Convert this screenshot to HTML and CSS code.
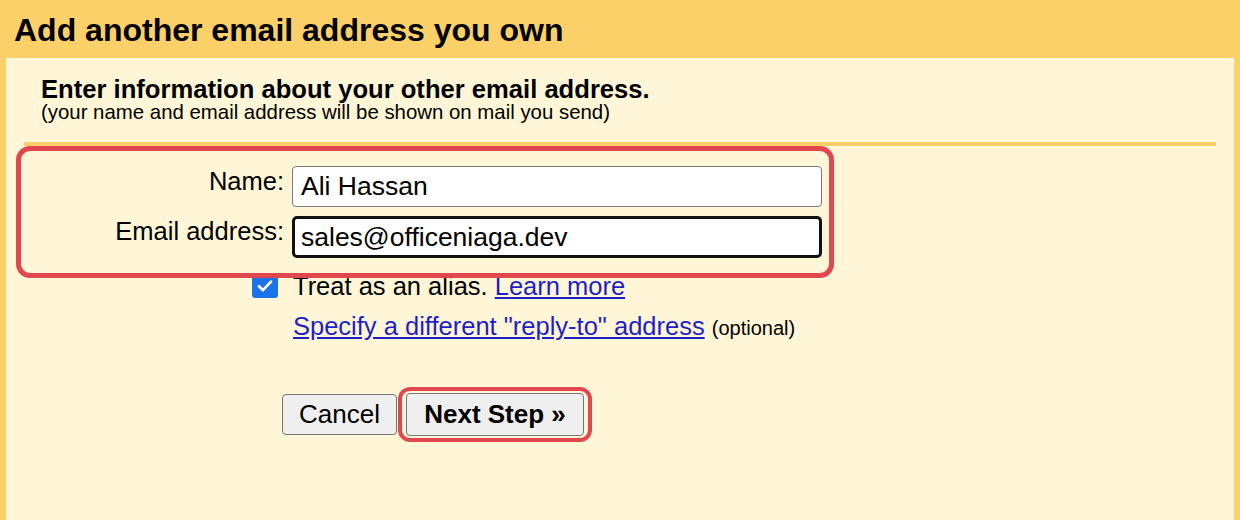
FILE: index.html
```html
<!DOCTYPE html>
<html lang="en">
<head>
<meta charset="utf-8">
<title>Add another email address you own</title>
<link rel="stylesheet" href="styles.css">
</head>
<body>
<div class="header">Add another email address you own</div>
<div class="panel">
  <div class="intro">
    <h2 class="intro-title">Enter information about your other email address.</h2>
    <p class="intro-sub">(your name and email address will be shown on mail you send)</p>
  </div>
  <div class="separator"></div>
  <div class="fields">
    <label class="field-label" for="name">Name:</label>
    <input class="field-input" id="name" type="text" value="Ali Hassan">
    <label class="field-label" for="email">Email address:</label>
    <input class="field-input field-focused" id="email" type="text" value="sales@officeniaga.dev">
  </div>
  <div class="alias-row">
    <span class="checkbox">
      <svg viewBox="0 0 24 24" width="20" height="20"><path d="M5 12.5l4.5 4.5L19 7" fill="none" stroke="#fff" stroke-width="3.2" stroke-linecap="square"/></svg>
    </span>
    <span class="alias-text">Treat as an alias. <a class="link" href="#">Learn more</a></span>
  </div>
  <div class="reply-row">
    <a class="link" href="#">Specify a different "reply-to" address</a> <span class="optional">(optional)</span>
  </div>
  <div class="buttons">
    <button class="btn" type="button">Cancel</button>
    <span class="btn-ring"><button class="btn btn-primary" type="button">Next Step »</button></span>
  </div>
</div>
</body>
</html>
```

FILE: styles.css
```css
html, body {
  margin: 0;
  padding: 0;
}

body {
  background: #fbd068;
  font-family: "Liberation Sans", Arial, sans-serif;
  color: #000;
  height: 520px;
  overflow: hidden;
}

.header {
  height: 58px;
  padding-left: 14px;
  font-weight: 700;
  font-size: 32px;
  line-height: 60px;
}

.panel {
  margin: 0 6px;
  background: #fff6d7;
  padding: 0 18px;
  height: 462px;
}

.intro {
  padding: 18px 17px 0;
}

.intro-title {
  margin: 0;
  font-size: 25.6px;
  line-height: 26px;
  font-weight: 700;
}

.intro-sub {
  margin: 0;
  font-size: 20.4px;
  line-height: 20px;
}

.separator {
  margin-top: 20px;
  height: 4px;
  background: #fbd068;
}

.fields {
  position: relative;
  z-index: 1;
  margin-left: -8px;
  width: 818px;
  box-sizing: border-box;
  border: 5px solid #e0484d;
  border-radius: 14px;
  padding: 15px 7px 15px 0;
  display: grid;
  grid-template-columns: 263px 530px;
  column-gap: 8px;
  row-gap: 9px;
}

.field-label {
  text-align: right;
  font-size: 25.5px;
  line-height: 30px;
}

.field-input {
  box-sizing: border-box;
  width: 530px;
  height: 41px;
  margin: 0;
  padding: 0 8px;
  border: 1px solid #7a7a7a;
  border-radius: 4px;
  background: #fff;
  font-family: "Liberation Sans", Arial, sans-serif;
  font-size: 26.5px;
  color: #000;
  outline: none;
}

.field-focused {
  height: 42px;
  border: 3px solid #111;
  border-radius: 5px;
  padding: 0 6px;
}

.alias-row {
  margin-top: -4px;
  padding-left: 228px;
  display: flex;
  align-items: flex-start;
}

.checkbox {
  width: 26px;
  height: 24px;
  border-radius: 3px;
  background: #1a73e8;
  display: flex;
  align-items: center;
  justify-content: center;
  margin-right: 15px;
}

.alias-text {
  font-size: 25.5px;
  line-height: 24px;
}

.link {
  color: #1f1fc8;
  text-decoration: underline;
}

.reply-row {
  margin-top: 16px;
  padding-left: 269px;
  font-size: 25.5px;
  line-height: 24px;
}

.optional {
  font-size: 20px;
}

.buttons {
  margin-top: 47px;
  padding-left: 258px;
  display: flex;
  align-items: center;
}

.btn {
  box-sizing: border-box;
  height: 41px;
  width: 115px;
  margin: 0;
  padding: 0;
  background: #efefef;
  border: 1px solid #767676;
  border-radius: 4px;
  font-family: "Liberation Sans", Arial, sans-serif;
  font-size: 26px;
  color: #000;
}

.btn-ring {
  margin-left: 1px;
  display: flex;
  border: 4px solid #e0484d;
  border-radius: 12px;
  padding: 2px 4px;
}

.btn-primary {
  width: 178px;
  height: 43px;
  font-weight: 700;
}
```
